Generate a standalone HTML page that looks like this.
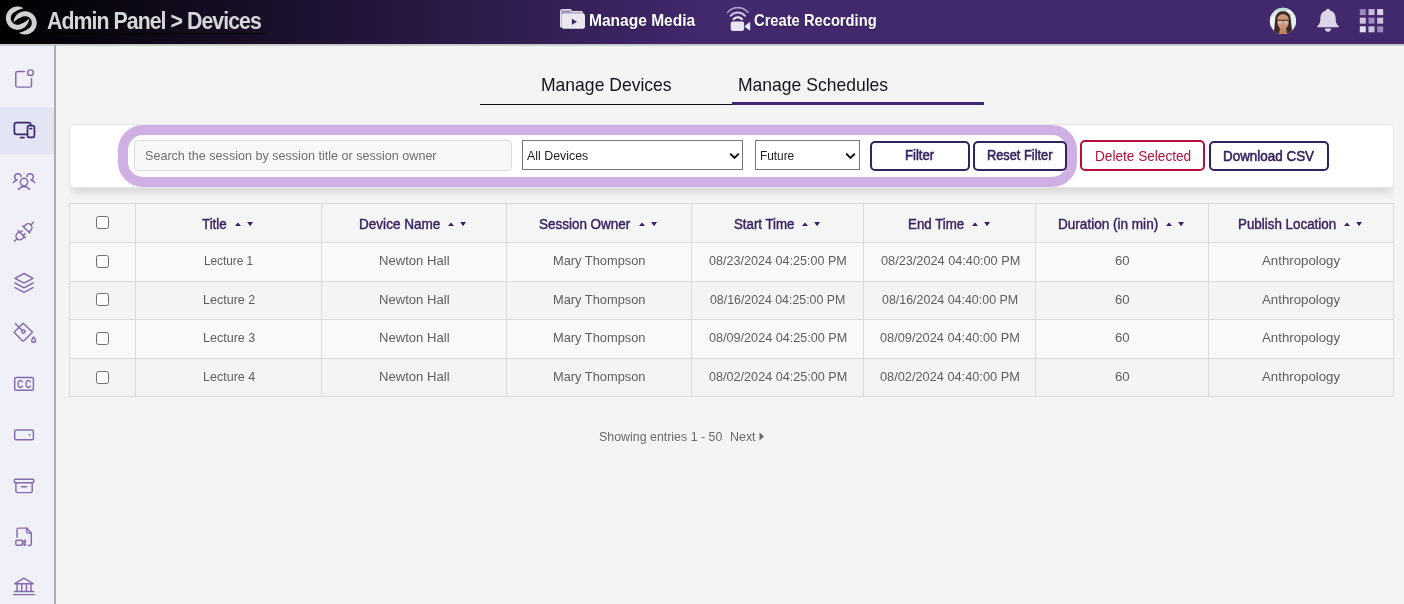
<!DOCTYPE html>
<html lang="en">
<head>
<meta charset="utf-8">
<title>Admin Panel - Devices</title>
<style>
*{box-sizing:border-box;margin:0;padding:0}
html,body{width:1404px;height:604px;overflow:hidden;background:#f4f4f4;font-family:"Liberation Sans",sans-serif;color:#555}
.abs{position:absolute}
.tx{position:absolute;display:inline-block;white-space:nowrap;transform-origin:0 50%}
#header{position:absolute;left:0;top:0;width:1404px;height:44px;background:linear-gradient(90deg,#000 0,#42286d 702px)}
#hline{position:absolute;left:0;top:44px;width:1404px;height:2px;background:linear-gradient(#c5c5c5,#cfcfcf)}
#tline{position:absolute;left:47px;top:33px;width:220px;height:1px;background:#000}
#sidebar{position:absolute;left:0;top:46px;width:54px;height:558px;background:#f0f1f8}
#sideline{position:absolute;left:54px;top:45px;width:2px;height:559px;background:#adadad}
#sactive{position:absolute;left:0;top:107px;width:54px;height:47px;background:#e4e5f4}
#cardclip{position:absolute;left:69px;top:110px;width:1325px;height:100px;overflow:hidden}
#card{position:absolute;left:0;top:14px;width:1325px;height:64px;background:#fff;border:1px solid #e6e6e6;border-radius:4px;box-shadow:0 6px 9px -2px rgba(0,0,0,.13)}
#ring{position:absolute;left:118px;top:125px;width:959px;height:62px;border:10px solid #cfb0e4;border-radius:25px}
#search{position:absolute;left:134px;top:140px;width:378px;height:31px;border:1px solid #dcdcdc;border-radius:4px;background:#f8f8f8}
.sel{position:absolute;top:140px;height:30px;border:1px solid #767676;background:#fff}
.sel svg{position:absolute;top:11px;width:11px;height:8px}
.btn{position:absolute;border:2px solid #35215f;border-radius:5px;background:#fff}
table{position:absolute;left:69px;top:203px;width:1324px;border-collapse:collapse;table-layout:fixed}
td,th{border:1px solid #dadada;text-align:center;vertical-align:middle;padding:0}
th{background:#f5f5f5;height:39px}
tr.o td{background:#f9f9f9}
tr.e td{background:#f4f4f4}
.cb{position:absolute;left:96px;width:13px;height:13px;border:1px solid #6f6f6f;border-radius:2.5px;background:#fff}
</style>
</head>
<body>
<div id="header"></div>
<div id="hline"></div>
<div id="sidebar"></div>
<div id="sactive"></div>
<div id="sideline"></div>
<div id="tline"></div>

<svg class="abs" style="left:0;top:0;width:44px;height:44px" viewBox="0 0 44 44"><g fill="#d2d2d2"><path d="M29.08 18.71 L29.02 19.46 L28.91 20.21 L28.74 20.95 L28.54 21.67 L28.28 22.39 L27.98 23.08 L27.63 23.75 L27.24 24.40 L26.81 25.02 L26.34 25.61 L25.83 26.17 L25.28 26.70 L24.71 27.19 L24.10 27.64 L23.46 28.05 L22.80 28.42 L22.12 28.74 L21.42 29.02 L20.69 29.25 L19.96 29.44 L19.22 29.57 L18.47 29.66 L17.71 29.70 L16.95 29.69 L16.20 29.63 L15.45 29.52 L14.71 29.36 L13.98 29.15 L13.27 28.90 L12.57 28.60 L11.90 28.26 L11.25 27.87 L10.63 27.44 L10.03 26.98 L9.47 26.47 L8.94 25.93 L8.45 25.35 L7.99 24.75 L7.58 24.12 L7.21 23.46 L6.88 22.77 L6.60 22.07 L6.37 21.35 L6.18 20.62 L6.04 19.88 L5.95 19.13 L5.90 18.37 L5.91 17.61 L5.97 16.86 L6.07 16.11 L6.23 15.37 L6.43 14.64 L6.68 13.93 L6.97 13.23 L7.31 12.55 L7.69 11.90 L8.12 11.28 L8.58 10.68 L9.09 10.11 L9.63 9.58 L10.20 9.09 L10.80 8.63 L11.43 8.21 L12.09 7.84 L12.77 7.51 L13.47 7.22 L14.19 6.98 L14.92 6.79 L15.66 6.65 L16.41 6.55 L17.17 6.50 L17.93 6.51 L18.68 6.56 L19.43 6.66 L20.17 6.81 L20.90 7.01 L21.62 7.26 L22.32 7.55 L22.99 7.88 L23.65 8.26 L23.65 8.26 L22.63 8.55 L21.77 8.75 L20.97 8.95 L20.24 9.18 L19.55 9.42 L18.92 9.67 L18.33 9.94 L17.79 10.21 L17.28 10.48 L16.81 10.75 L16.36 11.02 L15.94 11.27 L15.54 11.51 L15.15 11.74 L14.76 11.96 L14.38 12.17 L14.00 12.39 L13.63 12.63 L13.28 12.89 L12.95 13.18 L12.64 13.49 L12.35 13.81 L12.08 14.16 L11.84 14.52 L11.62 14.90 L11.42 15.29 L11.25 15.69 L11.10 16.10 L10.99 16.52 L10.90 16.95 L10.84 17.38 L10.81 17.82 L10.80 18.26 L10.83 18.69 L10.88 19.13 L10.96 19.56 L11.07 19.98 L11.21 20.39 L11.37 20.80 L11.56 21.19 L11.77 21.57 L12.01 21.94 L12.27 22.29 L12.56 22.62 L12.86 22.93 L13.19 23.23 L13.53 23.50 L13.89 23.74 L14.27 23.97 L14.66 24.17 L15.06 24.34 L15.47 24.48 L15.89 24.60 L16.32 24.69 L16.75 24.76 L17.18 24.79 L17.62 24.80 L18.06 24.78 L18.49 24.73 L18.92 24.65 L19.35 24.54 L19.76 24.41 L20.17 24.25 L20.56 24.06 L20.96 23.86 L21.36 23.68 L21.77 23.49 L22.20 23.29 L22.65 23.09 L23.12 22.88 L23.61 22.65 L24.13 22.39 L24.66 22.10 L25.22 21.77 L25.79 21.40 L26.38 20.98 L26.98 20.50 L27.61 19.97 L28.26 19.37 L29.08 18.71Z"/><path d="M29.08 18.71 L29.02 19.46 L28.91 20.21 L28.74 20.95 L28.54 21.67 L28.28 22.39 L27.98 23.08 L27.63 23.75 L27.24 24.40 L26.81 25.02 L26.34 25.61 L25.83 26.17 L25.28 26.70 L24.71 27.19 L24.10 27.64 L23.46 28.05 L22.80 28.42 L22.12 28.74 L21.42 29.02 L20.69 29.25 L19.96 29.44 L19.22 29.57 L18.47 29.66 L17.71 29.70 L16.95 29.69 L16.20 29.63 L15.45 29.52 L14.71 29.36 L13.98 29.15 L13.27 28.90 L12.57 28.60 L11.90 28.26 L11.25 27.87 L10.63 27.44 L10.03 26.98 L9.47 26.47 L8.94 25.93 L8.45 25.35 L7.99 24.75 L7.58 24.12 L7.21 23.46 L6.88 22.77 L6.60 22.07 L6.37 21.35 L6.18 20.62 L6.04 19.88 L5.95 19.13 L5.90 18.37 L5.91 17.61 L5.97 16.86 L6.07 16.11 L6.23 15.37 L6.43 14.64 L6.68 13.93 L6.97 13.23 L7.31 12.55 L7.69 11.90 L8.12 11.28 L8.58 10.68 L9.09 10.11 L9.63 9.58 L10.20 9.09 L10.80 8.63 L11.43 8.21 L12.09 7.84 L12.77 7.51 L13.47 7.22 L14.19 6.98 L14.92 6.79 L15.66 6.65 L16.41 6.55 L17.17 6.50 L17.93 6.51 L18.68 6.56 L19.43 6.66 L20.17 6.81 L20.90 7.01 L21.62 7.26 L22.32 7.55 L22.99 7.88 L23.65 8.26 L23.65 8.26 L22.63 8.55 L21.77 8.75 L20.97 8.95 L20.24 9.18 L19.55 9.42 L18.92 9.67 L18.33 9.94 L17.79 10.21 L17.28 10.48 L16.81 10.75 L16.36 11.02 L15.94 11.27 L15.54 11.51 L15.15 11.74 L14.76 11.96 L14.38 12.17 L14.00 12.39 L13.63 12.63 L13.28 12.89 L12.95 13.18 L12.64 13.49 L12.35 13.81 L12.08 14.16 L11.84 14.52 L11.62 14.90 L11.42 15.29 L11.25 15.69 L11.10 16.10 L10.99 16.52 L10.90 16.95 L10.84 17.38 L10.81 17.82 L10.80 18.26 L10.83 18.69 L10.88 19.13 L10.96 19.56 L11.07 19.98 L11.21 20.39 L11.37 20.80 L11.56 21.19 L11.77 21.57 L12.01 21.94 L12.27 22.29 L12.56 22.62 L12.86 22.93 L13.19 23.23 L13.53 23.50 L13.89 23.74 L14.27 23.97 L14.66 24.17 L15.06 24.34 L15.47 24.48 L15.89 24.60 L16.32 24.69 L16.75 24.76 L17.18 24.79 L17.62 24.80 L18.06 24.78 L18.49 24.73 L18.92 24.65 L19.35 24.54 L19.76 24.41 L20.17 24.25 L20.56 24.06 L20.96 23.86 L21.36 23.68 L21.77 23.49 L22.20 23.29 L22.65 23.09 L23.12 22.88 L23.61 22.65 L24.13 22.39 L24.66 22.10 L25.22 21.77 L25.79 21.40 L26.38 20.98 L26.98 20.50 L27.61 19.97 L28.26 19.37 L29.08 18.71Z" transform="rotate(180 21.3 20.5)"/></g></svg>
<svg class="abs" style="left:558px;top:6px;width:30px;height:26px" viewBox="558 6 30 26"><path d="M560.6 27.6 V11.2 Q560.6 9.6 562.2 9.6 H569.6 Q570.8 9.6 571.3 10.6 L571.8 11.6 H581 Q582.6 11.6 582.6 13.2 V14" fill="#a596bf" stroke="#e9e5f0" stroke-width="1.1"/><rect x="561.6" y="13.6" width="23.4" height="15.2" rx="2.2" fill="#ebe7f1"/><path d="M571.9 18.7 L577 21.7 L571.9 24.8 Z" fill="#38235d"/></svg>
<svg class="abs" style="left:724px;top:4px;width:30px;height:30px" viewBox="724 4 30 30"><g fill="none" stroke-linecap="round"><path d="M727.7 12.3 A13.2 13.2 0 0 1 747.9 12.3" stroke="#a99bc3" stroke-width="1.7"/><path d="M730.6 15.8 A9.4 9.4 0 0 1 745 15.8" stroke="#cfc7de" stroke-width="1.9"/><path d="M733.6 19.2 A5.4 5.4 0 0 1 742 19.2" stroke="#f1eef6" stroke-width="2.1"/></g><rect x="730.7" y="21.6" width="13.4" height="9.3" rx="1.8" fill="#e9e5f0"/><path d="M744.8 26 L749.4 22.3 Q750.2 21.8 750.2 22.8 V29.8 Q750.2 30.8 749.4 30.3 L744.8 27 Z" fill="#e9e5f0"/></svg>
<svg class="abs" style="left:1266px;top:4px;width:34px;height:34px" viewBox="1266 4 34 34"><defs><clipPath id="avc"><circle cx="1282.900" cy="20.950" r="13.100"/></clipPath><filter id="avb" x="-20%" y="-20%" width="140%" height="140%"><feGaussianBlur stdDeviation="0.550"/></filter></defs><g clip-path="url(#avc)"><rect x="1266" y="4" width="34" height="34" fill="#d3e4e3"/><g filter="url(#avb)"><rect x="1266" y="4" width="34" height="34" fill="#d3e4e3"/><ellipse cx="1272" cy="24" rx="3.500" ry="9" fill="#eef2f2"/><ellipse cx="1293.500" cy="20" rx="3" ry="8" fill="#e6efee"/><ellipse cx="1283" cy="8.500" rx="8" ry="2" fill="#bcdad6"/><ellipse cx="1290" cy="11.500" rx="3" ry="2" fill="#eef3f2"/><path d="M1272.800 37 C1274.500 30 1274.600 24 1275.200 19 C1275.800 13.800 1278.800 11.300 1283 11.300 C1287.200 11.300 1290.200 13.800 1290.800 19 C1291.400 24 1291.600 30 1293.200 37 Z" fill="#3b2a2b"/><path d="M1277.200 20.500 C1277.200 16.500 1279.500 14.200 1283 14.200 C1286.500 14.200 1288.900 16.500 1288.900 20.500 C1288.900 25.500 1286.200 29.800 1283 29.800 C1279.800 29.800 1277.200 25.500 1277.200 20.500 Z" fill="#cf977a"/><path d="M1279.800 29 H1286.200 L1287.500 37 H1278.500 Z" fill="#c08a66"/><path d="M1279.500 33.500 L1283 31.500 L1286.800 33.500 L1288 38 H1278 Z" fill="#c47a3c"/><rect x="1277.600" y="20.700" width="4.600" height="2.900" rx="1.200" fill="#d6b6a6"/><rect x="1283.700" y="20.700" width="4.600" height="2.900" rx="1.200" fill="#d6b6a6"/><path d="M1276.700 20.200 H1288.800" stroke="#4b3634" stroke-width="1.100"/><path d="M1277.400 20.600 V22.600 M1288.400 20.600 V22.600 M1282.950 20.400 V21.600" stroke="#4a3636" stroke-width=".7"/><ellipse cx="1283.100" cy="26.300" rx="2.100" ry=".900" fill="#cf7f8c"/></g></g></svg>
<svg class="abs" style="left:1314px;top:6px;width:28px;height:28px" viewBox="1314 6 28 28"><path d="M1328 8.800 C1329.200 8.800 1330 9.600 1330 10.600 C1333.600 11.500 1335.600 14.400 1335.600 18.200 C1335.600 22.600 1336.800 24.600 1338.800 26.200 V27.300 H1317.200 V26.200 C1319.200 24.600 1320.400 22.600 1320.400 18.200 C1320.400 14.400 1322.400 11.500 1326 10.600 C1326 9.600 1326.800 8.800 1328 8.800 Z" fill="#dbd5e7"/><path d="M1324.900 28.600 H1331.100 A3.100 3.100 0 0 1 1324.900 28.600 Z" fill="#dbd5e7"/></svg>
<svg class="abs" style="left:1358px;top:7px;width:28px;height:28px" viewBox="1358 7 28 28"><rect x="1359.800" y="9.100" width="6" height="6" fill="#9d88bd"/><rect x="1368.500" y="9.100" width="6" height="6" fill="#c7bbda"/><rect x="1377.200" y="9.100" width="6" height="6" fill="#dad3e7"/><rect x="1359.800" y="17.700" width="6" height="6" fill="#cdc3de"/><rect x="1368.500" y="17.700" width="6" height="6" fill="#a08cbf"/><rect x="1377.200" y="17.700" width="6" height="6" fill="#cdc3de"/><rect x="1359.800" y="26.300" width="6" height="6" fill="#e4deed"/><rect x="1368.500" y="26.300" width="6" height="6" fill="#cdc3de"/><rect x="1377.200" y="26.300" width="6" height="6" fill="#a08cbf"/></svg>

<svg class="abs" style="left:0;top:46px;width:54px;height:558px;overflow:hidden" viewBox="0 46 54 558" fill="none" stroke="#8569ad" stroke-width="1.45" stroke-linecap="round" stroke-linejoin="round">
<path d="M24.300 71.400 H17.500 a1.700 1.700 0 0 0 -1.700 1.700 V85.400 a1.700 1.700 0 0 0 1.700 1.700 H29.800 a1.700 1.700 0 0 0 1.700 -1.700 V78.600"/><circle cx="30.500" cy="72.700" r="2.850"/>
<g stroke="#3f296d" stroke-width="1.700"><path d="M26.800 134.300 H16.400 a2 2 0 0 1 -2 -2 V124.700 a2 2 0 0 1 2 -2 H28.700 a2 2 0 0 1 2 2 V125.200"/><path d="M20.600 137.600 H24"/><rect x="27.500" y="125.700" width="6.900" height="11.600" rx="1.800"/><path d="M29.900 128.600 H31.700"/></g>
<circle cx="24" cy="182" r="3.700"/><path d="M18.400 189.500 C20 187.300 22 186.400 24 186.400 C26 186.400 28 187.300 29.600 189.500"/><path d="M21.080 176.510 A3.200 3.200 0 1 0 16.750 179.890"/><path d="M16.800 180.300 C15.300 180.700 14 181.500 13.200 182.700"/><path d="M26.920 176.510 A3.200 3.200 0 1 1 31.250 179.890"/><path d="M31.200 180.300 C32.700 180.700 34 181.500 34.800 182.700"/>
<g transform="translate(21.700 234.150) rotate(45)"><path d="M-3.700 0 V2.800 A3.700 3.700 0 0 0 3.700 2.800 V0"/><path d="M-5.100 0 H5.100"/><path d="M0 6.500 V10.100"/><path d="M-2.100 0 V-2.700 M2.100 0 V-2.700"/></g><g transform="translate(26.250 229.500) rotate(225)"><path d="M-3.700 0 V2.800 A3.700 3.700 0 0 0 3.700 2.800 V0"/><path d="M-5.100 0 H5.100"/><path d="M0 6.500 V10.100"/></g>
<path d="M24 273.500 L15 278.300 L24 283.100 L33 278.300 Z"/><path d="M15 283 L24 287.800 L33 283"/><path d="M15 287.600 L24 292.400 L33 287.600"/>
<path d="M23.100 323.300 L14.100 332.300 L22 340.400 Q23.100 341.500 24.200 340.400 L32.500 332.300 Z"/><path d="M15.400 323.500 L22.200 330.400"/><circle cx="23.400" cy="331.600" r="1.650"/><path d="M33.600 337 C32.600 338.600 31.700 339.400 31.700 340.400 a1.900 1.900 0 0 0 3.800 0 C35.500 339.400 34.600 338.600 33.600 337 Z"/>
<rect x="14.700" y="377.500" width="18.700" height="12.800" rx="1.500"/>
<rect x="14.700" y="429.900" width="18.700" height="9.900" rx="1.500"/><circle cx="29.600" cy="434.900" r=".9" fill="#8569ad" stroke="none"/>
<rect x="14.300" y="479.300" width="19.500" height="3.500" rx="1.200"/><path d="M15.900 482.800 V491 a1.600 1.600 0 0 0 1.600 1.600 H30.600 a1.600 1.600 0 0 0 1.600 -1.600 V482.800"/><path d="M21.500 486.700 H26.600"/>
<path d="M17 537.200 V529.700 a1.600 1.600 0 0 1 1.600 -1.600 H26.700 L31.300 533 V543.900 a1.600 1.600 0 0 1 -1.600 1.600 H28.300"/><path d="M26.700 528.100 V531.800 a1.300 1.300 0 0 0 1.300 1.300 H31.300"/><rect x="15.800" y="540.300" width="6.600" height="4.900" rx="1.200"/><path d="M22.500 542.100 L25.200 540.100 V545.400 L22.500 543.400"/>
<path d="M14.500 583.800 L23.900 578.100 L33.400 583.800 Z"/><path d="M17.100 584 V591.300 M21.700 584 V591.300 M26.400 584 V591.300 M31 584 V591.300"/><path d="M14.600 591.400 H33.500"/><path d="M13.400 594.600 H34.700"/>
<text transform="translate(17 387.600) scale(.86 1)" font-family="Liberation Sans, sans-serif" font-weight="700" font-size="10.200" fill="#8569ad" stroke="none">C</text><text transform="translate(25.100 387.600) scale(.86 1)" font-family="Liberation Sans, sans-serif" font-weight="700" font-size="10.200" fill="#8569ad" stroke="none">C</text>
</svg>


<div class="abs" style="left:480px;top:104px;width:252px;height:1px;background:#111"></div>
<div class="abs" style="left:732px;top:102px;width:252px;height:3px;background:#3f2870"></div>

<div id="cardclip"><div id="card"></div></div>
<div id="ring"></div>
<div id="search"></div>
<div class="sel" style="left:522px;width:221px"><svg style="left:206px" viewBox="0 0 11 8"><path d="M1.2 1.6 L5.5 5.9 L9.8 1.6" fill="none" stroke="#111" stroke-width="2"/></svg></div>
<div class="sel" style="left:755px;width:105px"><svg style="left:89px" viewBox="0 0 11 8"><path d="M1.2 1.6 L5.5 5.9 L9.8 1.6" fill="none" stroke="#111" stroke-width="2"/></svg></div>
<div class="btn" style="left:870px;top:141px;width:100px;height:30px"></div>
<div class="btn" style="left:973px;top:141px;width:94px;height:30px"></div>
<div class="btn" style="left:1080px;top:140px;width:125px;height:31px;border-color:#b5103c"></div>
<div class="btn" style="left:1209px;top:141px;width:120px;height:30px"></div>

<table>
<colgroup><col style="width:66px"><col style="width:186px"><col style="width:185px"><col style="width:185px"><col style="width:172px"><col style="width:172px"><col style="width:173px"><col style="width:185px"></colgroup>
<tr><th></th><th></th><th></th><th></th><th></th><th></th><th></th><th></th></tr>
<tr class="o" style="height:39px"><td></td><td></td><td></td><td></td><td></td><td></td><td></td><td></td></tr>
<tr class="e" style="height:38px"><td></td><td></td><td></td><td></td><td></td><td></td><td></td><td></td></tr>
<tr class="o" style="height:39px"><td></td><td></td><td></td><td></td><td></td><td></td><td></td><td></td></tr>
<tr class="e" style="height:38px"><td></td><td></td><td></td><td></td><td></td><td></td><td></td><td></td></tr>
</table>
<span class="cb" style="top:216px"></span>
<span class="cb" style="top:255px"></span>
<span class="cb" style="top:293px"></span>
<span class="cb" style="top:332px"></span>
<span class="cb" style="top:371px"></span>
<svg class="abs" style="left:234.6px;top:221px;width:20px;height:7px" viewBox="0 0 20 7"><path d="M0 5 L3 1.600 L6 5 Z M12.200 1 H18 L15.100 5.200 Z" fill="#35225f"/></svg>
<svg class="abs" style="left:448.3px;top:221px;width:20px;height:7px" viewBox="0 0 20 7"><path d="M0 5 L3 1.600 L6 5 Z M12.200 1 H18 L15.100 5.200 Z" fill="#35225f"/></svg>
<svg class="abs" style="left:638.6px;top:221px;width:20px;height:7px" viewBox="0 0 20 7"><path d="M0 5 L3 1.600 L6 5 Z M12.200 1 H18 L15.100 5.200 Z" fill="#35225f"/></svg>
<svg class="abs" style="left:801.7px;top:221px;width:20px;height:7px" viewBox="0 0 20 7"><path d="M0 5 L3 1.600 L6 5 Z M12.200 1 H18 L15.100 5.200 Z" fill="#35225f"/></svg>
<svg class="abs" style="left:971.9px;top:221px;width:20px;height:7px" viewBox="0 0 20 7"><path d="M0 5 L3 1.600 L6 5 Z M12.200 1 H18 L15.100 5.200 Z" fill="#35225f"/></svg>
<svg class="abs" style="left:1166.1px;top:221px;width:20px;height:7px" viewBox="0 0 20 7"><path d="M0 5 L3 1.600 L6 5 Z M12.200 1 H18 L15.100 5.200 Z" fill="#35225f"/></svg>
<svg class="abs" style="left:1343.7px;top:221px;width:20px;height:7px" viewBox="0 0 20 7"><path d="M0 5 L3 1.600 L6 5 Z M12.200 1 H18 L15.100 5.200 Z" fill="#35225f"/></svg>
<svg class="abs" style="left:759px;top:432px;width:6px;height:9px" viewBox="0 0 6 9"><path d="M0.5 0.5 L5 4.5 L0.5 8.5 Z" fill="#6a6a6a"/></svg>

<span class="tx" id="title" style="left:47.00px;top:6.28px;font-size:24.6px;line-height:30px;transform:scaleX(0.8664);color:#d6d6d8;font-weight:700;letter-spacing:-1.1px">Admin Panel &gt; Devices</span>
<span class="tx" id="mm" style="left:589.30px;top:11.01px;font-size:17px;line-height:20px;transform:scaleX(0.9138);color:#fff;font-weight:700;text-shadow:0 1px 1px rgba(20,0,40,.5)">Manage Media</span>
<span class="tx" id="cr" style="left:754.30px;top:11.11px;font-size:17px;line-height:20px;transform:scaleX(0.8655);color:#fff;font-weight:700;text-shadow:0 1px 1px rgba(20,0,40,.5)">Create Recording</span>
<span class="tx" id="t1" style="left:540.80px;top:74.93px;font-size:17.8px;line-height:21px;transform:scaleX(0.9864);color:#15131b">Manage Devices</span>
<span class="tx" id="t2" style="left:737.90px;top:74.93px;font-size:17.8px;line-height:21px;transform:scaleX(0.9855);color:#15131b">Manage Schedules</span>
<span class="tx" id="ph" style="left:145.10px;top:148.16px;font-size:13.4px;line-height:16px;transform:scaleX(0.9394);color:#6e6e6e">Search the session by session title or session owner</span>
<span class="tx" id="s1t" style="left:527.00px;top:148.13px;font-size:13.2px;line-height:16px;transform:scaleX(0.9385);color:#1e1e1e">All Devices</span>
<span class="tx" id="s2t" style="left:760.40px;top:148.13px;font-size:13.2px;line-height:16px;transform:scaleX(0.8974);color:#1e1e1e">Future</span>
<span class="tx" id="b1t" style="left:905.30px;top:147.45px;font-size:14px;line-height:17px;transform:scaleX(0.9387);color:#36235f;-webkit-text-stroke:0.55px #36235f">Filter</span>
<span class="tx" id="b2t" style="left:987.40px;top:147.45px;font-size:14px;line-height:17px;transform:scaleX(0.9139);color:#36235f;-webkit-text-stroke:0.55px #36235f">Reset Filter</span>
<span class="tx" id="b3t" style="left:1095.00px;top:147.88px;font-size:14.5px;line-height:17px;transform:scaleX(0.9392);color:#b5103c">Delete Selected</span>
<span class="tx" id="b4t" style="left:1223.40px;top:147.95px;font-size:14px;line-height:17px;transform:scaleX(0.9589);color:#36235f;-webkit-text-stroke:0.55px #36235f">Download CSV</span>
<span class="tx" id="h0" style="left:202.00px;top:215.62px;font-size:13.8px;line-height:17px;transform:scaleX(0.9654);color:#36235f;-webkit-text-stroke:0.42px #36235f">Title</span>
<span class="tx" id="h1" style="left:359.20px;top:215.62px;font-size:13.8px;line-height:17px;transform:scaleX(0.9831);color:#36235f;-webkit-text-stroke:0.42px #36235f">Device Name</span>
<span class="tx" id="h2" style="left:539.40px;top:215.62px;font-size:13.8px;line-height:17px;transform:scaleX(0.9755);color:#36235f;-webkit-text-stroke:0.42px #36235f">Session Owner</span>
<span class="tx" id="h3" style="left:733.60px;top:215.62px;font-size:13.8px;line-height:17px;transform:scaleX(0.9619);color:#36235f;-webkit-text-stroke:0.42px #36235f">Start Time</span>
<span class="tx" id="h4" style="left:908.40px;top:215.62px;font-size:13.8px;line-height:17px;transform:scaleX(0.9655);color:#36235f;-webkit-text-stroke:0.42px #36235f">End Time</span>
<span class="tx" id="h5" style="left:1058.40px;top:215.62px;font-size:13.8px;line-height:17px;transform:scaleX(0.9824);color:#36235f;-webkit-text-stroke:0.42px #36235f">Duration (in min)</span>
<span class="tx" id="h6" style="left:1238.30px;top:215.62px;font-size:13.8px;line-height:17px;transform:scaleX(0.9693);color:#36235f;-webkit-text-stroke:0.42px #36235f">Publish Location</span>
<span class="tx" id="r0c0" style="left:204.00px;top:253.20px;font-size:13px;line-height:16px;transform:scaleX(0.9074);color:#5e5e5e">Lecture 1</span>
<span class="tx" id="r0c1" style="left:378.50px;top:253.20px;font-size:13px;line-height:16px;transform:scaleX(1.0071);color:#5e5e5e">Newton Hall</span>
<span class="tx" id="r0c2" style="left:552.80px;top:253.20px;font-size:13px;line-height:16px;transform:scaleX(0.9872);color:#5e5e5e">Mary Thompson</span>
<span class="tx" id="r0c3" style="left:709.20px;top:253.20px;font-size:13px;line-height:16px;transform:scaleX(0.9676);color:#5e5e5e">08/23/2024 04:25:00 PM</span>
<span class="tx" id="r0c4" style="left:880.70px;top:253.20px;font-size:13px;line-height:16px;transform:scaleX(0.9782);color:#5e5e5e">08/23/2024 04:40:00 PM</span>
<span class="tx" id="r0c5" style="left:1115.20px;top:253.20px;font-size:13px;line-height:16px;transform:scaleX(1.0143);color:#5e5e5e">60</span>
<span class="tx" id="r0c6" style="left:1261.70px;top:253.20px;font-size:13px;line-height:16px;transform:scaleX(1.0195);color:#5e5e5e">Anthropology</span>
<span class="tx" id="r1c0" style="left:202.50px;top:292.10px;font-size:13px;line-height:16px;transform:scaleX(0.9630);color:#5e5e5e">Lecture 2</span>
<span class="tx" id="r1c1" style="left:378.50px;top:292.10px;font-size:13px;line-height:16px;transform:scaleX(1.0071);color:#5e5e5e">Newton Hall</span>
<span class="tx" id="r1c2" style="left:552.80px;top:292.10px;font-size:13px;line-height:16px;transform:scaleX(0.9872);color:#5e5e5e">Mary Thompson</span>
<span class="tx" id="r1c3" style="left:710.40px;top:292.10px;font-size:13px;line-height:16px;transform:scaleX(0.9500);color:#5e5e5e">08/16/2024 04:25:00 PM</span>
<span class="tx" id="r1c4" style="left:882.00px;top:292.10px;font-size:13px;line-height:16px;transform:scaleX(0.9563);color:#5e5e5e">08/16/2024 04:40:00 PM</span>
<span class="tx" id="r1c5" style="left:1115.20px;top:292.10px;font-size:13px;line-height:16px;transform:scaleX(1.0143);color:#5e5e5e">60</span>
<span class="tx" id="r1c6" style="left:1261.70px;top:292.10px;font-size:13px;line-height:16px;transform:scaleX(1.0195);color:#5e5e5e">Anthropology</span>
<span class="tx" id="r2c0" style="left:202.50px;top:330.30px;font-size:13px;line-height:16px;transform:scaleX(0.9630);color:#5e5e5e">Lecture 3</span>
<span class="tx" id="r2c1" style="left:378.50px;top:330.30px;font-size:13px;line-height:16px;transform:scaleX(1.0071);color:#5e5e5e">Newton Hall</span>
<span class="tx" id="r2c2" style="left:552.80px;top:330.30px;font-size:13px;line-height:16px;transform:scaleX(0.9872);color:#5e5e5e">Mary Thompson</span>
<span class="tx" id="r2c3" style="left:708.70px;top:330.30px;font-size:13px;line-height:16px;transform:scaleX(0.9711);color:#5e5e5e">08/09/2024 04:25:00 PM</span>
<span class="tx" id="r2c4" style="left:880.20px;top:330.30px;font-size:13px;line-height:16px;transform:scaleX(0.9817);color:#5e5e5e">08/09/2024 04:40:00 PM</span>
<span class="tx" id="r2c5" style="left:1115.20px;top:330.30px;font-size:13px;line-height:16px;transform:scaleX(1.0143);color:#5e5e5e">60</span>
<span class="tx" id="r2c6" style="left:1261.70px;top:330.30px;font-size:13px;line-height:16px;transform:scaleX(1.0195);color:#5e5e5e">Anthropology</span>
<span class="tx" id="r3c0" style="left:202.50px;top:369.10px;font-size:13px;line-height:16px;transform:scaleX(0.9630);color:#5e5e5e">Lecture 4</span>
<span class="tx" id="r3c1" style="left:378.50px;top:369.10px;font-size:13px;line-height:16px;transform:scaleX(1.0071);color:#5e5e5e">Newton Hall</span>
<span class="tx" id="r3c2" style="left:552.80px;top:369.10px;font-size:13px;line-height:16px;transform:scaleX(0.9872);color:#5e5e5e">Mary Thompson</span>
<span class="tx" id="r3c3" style="left:708.70px;top:369.10px;font-size:13px;line-height:16px;transform:scaleX(0.9711);color:#5e5e5e">08/02/2024 04:25:00 PM</span>
<span class="tx" id="r3c4" style="left:880.20px;top:369.10px;font-size:13px;line-height:16px;transform:scaleX(0.9817);color:#5e5e5e">08/02/2024 04:40:00 PM</span>
<span class="tx" id="r3c5" style="left:1115.20px;top:369.10px;font-size:13px;line-height:16px;transform:scaleX(1.0143);color:#5e5e5e">60</span>
<span class="tx" id="r3c6" style="left:1261.70px;top:369.10px;font-size:13px;line-height:16px;transform:scaleX(1.0195);color:#5e5e5e">Anthropology</span>
<span class="tx" id="pg1" style="left:599.10px;top:428.90px;font-size:13px;line-height:16px;transform:scaleX(0.9535);color:#6a6a6a">Showing entries 1 - 50</span>
<span class="tx" id="pg2" style="left:729.90px;top:428.90px;font-size:13px;line-height:16px;transform:scaleX(0.9556);color:#6a6a6a">Next</span>
</body>
</html>
